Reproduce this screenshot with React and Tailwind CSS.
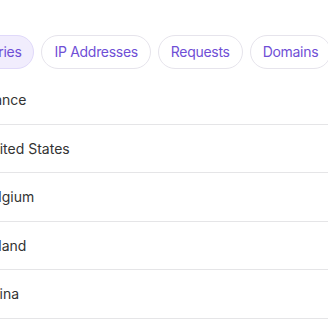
import React from "react";

const tabs = [
  { label: "Countries", active: true },
  { label: "IP Addresses" },
  { label: "Requests" },
  { label: "Domains" },
  { label: "Paths" },
];

const countries = ["France", "United States", "Belgium", "Poland", "China"];

export default function App() {
  return (
    <div className="h-[320px] w-[328px] overflow-hidden bg-white font-['Inter',sans-serif]">
      {/* clipped heading, only its colon shows */}
      <div className="-ml-[84px] h-[27px] whitespace-nowrap pt-[4px] text-[14px] leading-5 text-[#c4c4cc]">
        Group by:
      </div>

      <div className="-ml-[53px] mt-[8px] flex gap-[7px] whitespace-nowrap">
        {tabs.map((t) => (
          <button
            key={t.label}
            type="button"
            className={
              t.active
                ? "shrink-0 rounded-full border border-[#e0d9fa] bg-[#f1edfd] px-3 py-[6px] text-[14px] leading-5 tracking-[-0.3px] text-[#6f4fd6]"
                : "shrink-0 rounded-full border border-[#e6e4ec] bg-white px-3 py-[6px] text-[14px] leading-5 tracking-[-0.3px] text-[#6f4fd6]"
            }
          >
            {t.label}
          </button>
        ))}
      </div>

      <ul className="-ml-[19px] mt-[7px]">
        {countries.map((c) => (
          <li
            key={c}
            className="flex h-[48.5px] items-center border-b border-[#e5e5e7] text-[14px] text-[#333333]"
          >
            {c}
          </li>
        ))}
      </ul>
    </div>
  );
}
